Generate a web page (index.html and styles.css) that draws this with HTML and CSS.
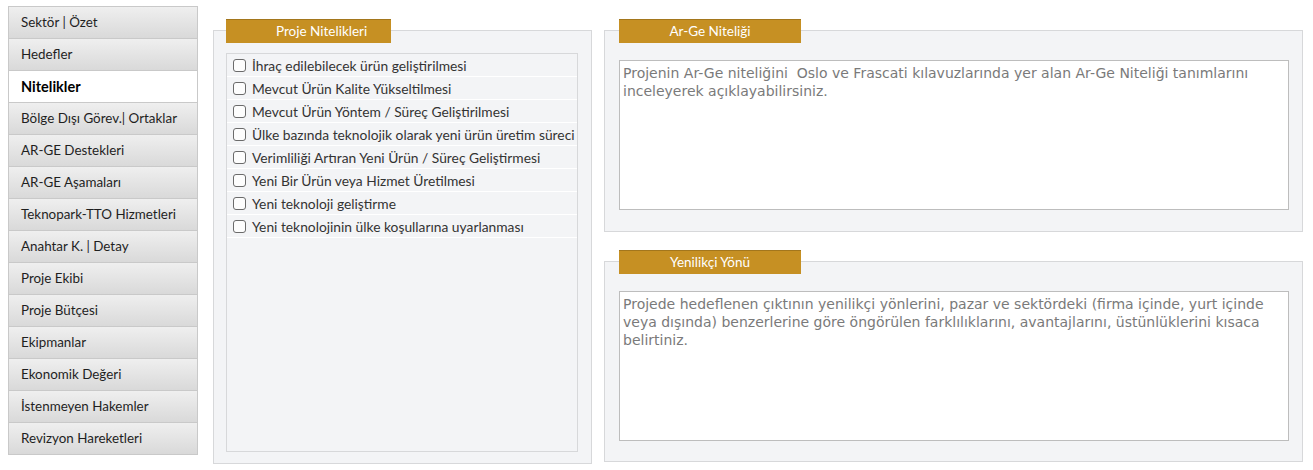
FILE: index.html
```html
<!DOCTYPE html>
<html lang="tr">
<head>
<meta charset="utf-8">
<title>Nitelikler</title>
<link rel="stylesheet" href="styles.css">
</head>
<body>
<div class="page">
  <nav class="sidebar">
    <a class="nav-item">Sektör | Özet</a>
    <a class="nav-item">Hedefler</a>
    <a class="nav-item active">Nitelikler</a>
    <a class="nav-item">Bölge Dışı Görev.| Ortaklar</a>
    <a class="nav-item">AR-GE Destekleri</a>
    <a class="nav-item">AR-GE Aşamaları</a>
    <a class="nav-item">Teknopark-TTO Hizmetleri</a>
    <a class="nav-item">Anahtar K. | Detay</a>
    <a class="nav-item">Proje Ekibi</a>
    <a class="nav-item">Proje Bütçesi</a>
    <a class="nav-item">Ekipmanlar</a>
    <a class="nav-item">Ekonomik Değeri</a>
    <a class="nav-item">İstenmeyen Hakemler</a>
    <a class="nav-item">Revizyon Hareketleri</a>
  </nav>

  <section class="panel panel-mid">
    <div class="tab tab-mid">Proje Nitelikleri</div>
    <div class="check-list">
      <label class="check-row"><span class="box"></span><span class="check-text">İhraç edilebilecek ürün geliştirilmesi</span></label>
      <label class="check-row"><span class="box"></span><span class="check-text">Mevcut Ürün Kalite Yükseltilmesi</span></label>
      <label class="check-row"><span class="box"></span><span class="check-text">Mevcut Ürün Yöntem / Süreç Geliştirilmesi</span></label>
      <label class="check-row"><span class="box"></span><span class="check-text">Ülke bazında teknolojik olarak yeni ürün üretim süreci</span></label>
      <label class="check-row"><span class="box"></span><span class="check-text">Verimliliği Artıran Yeni Ürün / Süreç Geliştirmesi</span></label>
      <label class="check-row"><span class="box"></span><span class="check-text">Yeni Bir Ürün veya Hizmet Üretilmesi</span></label>
      <label class="check-row"><span class="box"></span><span class="check-text">Yeni teknoloji geliştirme</span></label>
      <label class="check-row"><span class="box"></span><span class="check-text">Yeni teknolojinin ülke koşullarına uyarlanması</span></label>
    </div>
  </section>

  <div class="right-col">
    <section class="panel panel-right panel-top">
      <div class="tab tab-right">Ar-Ge Niteliği</div>
      <textarea class="text-box">Projenin Ar-Ge niteliğini  Oslo ve Frascati kılavuzlarında yer alan Ar-Ge Niteliği tanımlarını inceleyerek açıklayabilirsiniz.</textarea>
    </section>
    <section class="panel panel-right panel-bottom">
      <div class="tab tab-right">Yenilikçi Yönü</div>
      <textarea class="text-box">Projede hedeflenen çıktının yenilikçi yönlerini, pazar ve sektördeki (firma içinde, yurt içinde veya dışında) benzerlerine göre öngörülen farklılıklarını, avantajlarını, üstünlüklerini kısaca belirtiniz.</textarea>
    </section>
  </div>
</div>
</body>
</html>
```

FILE: styles.css
```css
html, body {
  margin: 0;
  padding: 0;
  background: #ffffff;
}

.page {
  display: flex;
  align-items: flex-start;
  padding: 6px 10px 0 8px;
  font-family: Lato, "Noto Sans", sans-serif;
}

/* Sidebar */
.sidebar {
  width: 190px;
  box-sizing: border-box;
  display: flex;
  flex-direction: column;
  border: 1px solid #c9c9c9;
  border-bottom: none;
  flex: none;
}

.nav-item {
  display: flex;
  align-items: center;
  height: 32px;
  box-sizing: border-box;
  padding: 0 0 1px 12px;
  border-bottom: 1px solid #c9c9c9;
  background: linear-gradient(#efefef, #d9d9d9);
  color: #1f1f1f;
  font-size: 13.4px;
  white-space: nowrap;
  cursor: pointer;
}

.nav-item.active {
  background: #ffffff;
  color: #000000;
  font-weight: 700;
  font-size: 14.5px;
}

/* Panels */
.panel {
  box-sizing: border-box;
  border: 1px solid #d7d8da;
  background: #f3f4f6;
  display: flex;
  flex-direction: column;
  align-items: flex-start;
}

.panel-mid {
  width: 379px;
  height: 434px;
  margin: 24px 0 0 15px;
  padding: 0 13px 11px 12px;
}

.tab {
  height: 24px;
  box-sizing: border-box;
  margin-top: -12px;
  background: #c69023;
  border-top: 1px solid #a3761c;
  color: #ffffff;
  font-size: 13.5px;
  display: flex;
  align-items: center;
  justify-content: center;
  padding-bottom: 1px;
  flex: none;
}

.tab-mid {
  width: 165px;
  margin-bottom: 10px;
  justify-content: flex-start;
  padding-left: 50px;
}

.tab-right {
  width: 182px;
  margin-bottom: 17px;
}

.check-list {
  flex: 1;
  align-self: stretch;
  box-sizing: border-box;
  border: 1px solid #d7d8da;
  display: flex;
  flex-direction: column;
  overflow: hidden;
}

.check-row {
  display: flex;
  align-items: center;
  height: 23px;
  box-sizing: border-box;
  border-bottom: 1px solid #ffffff;
  padding: 1px 0 0 6px;
  white-space: nowrap;
  overflow: hidden;
  color: #333333;
  font-size: 13.8px;
  flex: none;
}

.box {
  width: 13px;
  height: 13px;
  box-sizing: border-box;
  border: 1px solid #6b6b6b;
  border-radius: 3px;
  background: #fdfdfd;
  margin-right: 6px;
  flex: none;
}

/* Right column */
.right-col {
  width: 699px;
  margin-left: 12px;
  display: flex;
  flex-direction: column;
  flex: none;
}

.panel-right {
  width: 699px;
  padding: 0 13px 0 14px;
}

.panel-top {
  margin-top: 24px;
  height: 202px;
  padding-bottom: 21px;
}

.panel-bottom {
  margin-top: 29px;
  height: 201px;
  padding-bottom: 20px;
}

.text-box {
  align-self: stretch;
  height: 150px;
  box-sizing: border-box;
  margin: 0;
  padding: 3px;
  border: 1px solid #bdbdbd;
  background: #ffffff;
  color: #7a7a7a;
  font-family: "DejaVu Sans", Verdana, sans-serif;
  font-size: 14px;
  line-height: 18px;
  resize: none;
  outline: none;
  overflow: hidden;
}
```
